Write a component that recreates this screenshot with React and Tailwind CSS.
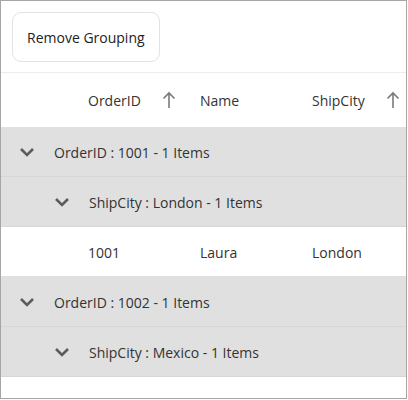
import React from "react";

function Chevron() {
    return (
        <svg width="16" height="10" viewBox="0 0 16 10" className="shrink-0">
            <polyline points="2,2 8,8 14,2" fill="none" stroke="#5c5c5c" strokeWidth="2.6" />
        </svg>
    );
}

function SortArrow() {
    return (
        <svg width="14" height="18" viewBox="0 0 14 18">
            <path d="M7 17V2M1.5 7.5L7 2l5.5 5.5" fill="none" stroke="#7a7a7a" strokeWidth="1.6" />
        </svg>
    );
}

function GroupRow({ level, text }) {
    return (
        <div className="flex h-[50px] items-center border-b border-[#d6d6d6] bg-[#e0e0e0]">
            <div className={level === 1 ? "w-[53px] shrink-0 pl-[18px]" : "w-[88px] shrink-0 pl-[53px]"}>
                <Chevron />
            </div>
            <span className="pt-[2px]">{text}</span>
        </div>
    );
}

export default function App() {
    return (
        <div
            className="h-[399px] w-[407px] overflow-hidden border border-[#a6a6a6] bg-white text-[14px] text-[#333]"
            style={{ fontFamily: '"Open Sans", "Noto Sans", sans-serif' }}
        >
            {/* toolbar */}
            <div className="h-[72px] border-b border-[#ececec] px-[11px] pt-[11px]">
                <button className="h-[50px] rounded-[9px] border border-[#e3e3e3] bg-white px-[14px] text-[#222]">
                    Remove Grouping
                </button>
            </div>

            {/* header */}
            <div className="flex h-[54px] w-[500px] items-center">
                <div className="w-[76px] shrink-0" />
                <div className="flex w-[112px] items-center justify-between pl-[11px] pr-[13px]">
                    <span>OrderID</span>
                    <SortArrow />
                </div>
                <div className="w-[112px] pl-[11px]">Name</div>
                <div className="flex w-[112px] items-center justify-between pl-[11px] pr-[13px]">
                    <span>ShipCity</span>
                    <SortArrow />
                </div>
            </div>

            <GroupRow level={1} text="OrderID : 1001 - 1 Items" />
            <GroupRow level={2} text="ShipCity : London - 1 Items" />
            <div className="flex h-[50px] w-[500px] items-center border-b border-[#e0e0e0] pt-[2px]">
                <div className="w-[76px] shrink-0" />
                <div className="w-[112px] pl-[11px]">1001</div>
                <div className="w-[112px] pl-[11px]">Laura</div>
                <div className="w-[112px] pl-[11px]">London</div>
            </div>
            <GroupRow level={1} text="OrderID : 1002 - 1 Items" />
            <GroupRow level={2} text="ShipCity : Mexico - 1 Items" />
        </div>
    );
}
